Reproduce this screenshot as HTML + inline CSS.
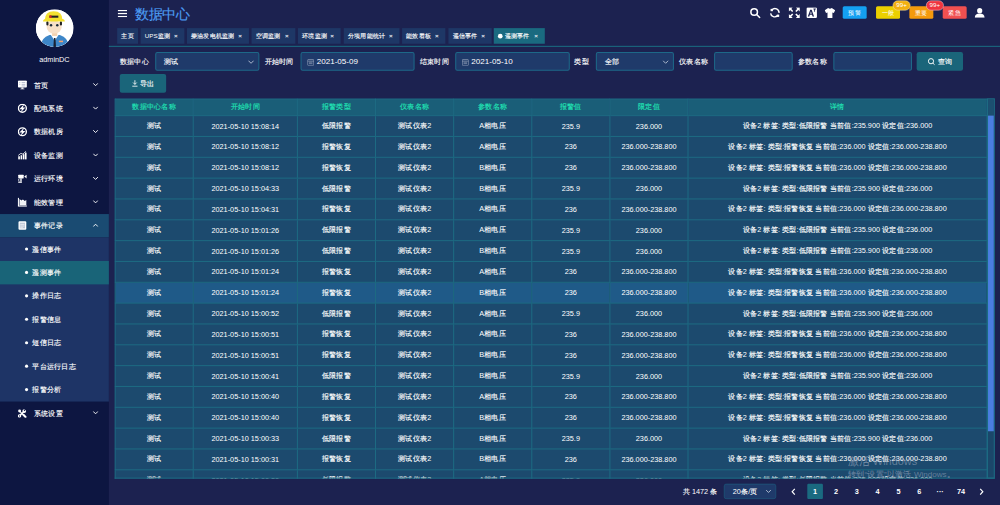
<!DOCTYPE html>
<html><head><meta charset="utf-8">
<style>
html,body{margin:0;padding:0;width:1000px;height:505px;overflow:hidden;background:#1c2250;}
*{box-sizing:border-box;}
#wrap{position:absolute;left:0;top:0;width:1920px;height:970px;transform:scale(0.5208333);transform-origin:0 0;font-family:"Liberation Sans",sans-serif;color:#fff;font-size:14px;background:#1c2250;overflow:hidden;}
.abs{position:absolute;}
i{font-style:normal;-webkit-text-stroke:0.25px;}
.hb i{-webkit-text-stroke:0;}
/* sidebar */
#side{position:absolute;left:0;top:0;width:209px;height:970px;background:#0d1641;}
#avatar{position:absolute;left:69px;top:18px;width:72px;height:72px;border-radius:50%;background:#fff;overflow:hidden;}
#uname{position:absolute;left:0;width:209px;top:107px;text-align:center;font-size:14px;color:#fff;}
.mi{position:absolute;left:0;width:209px;height:45px;line-height:45px;font-size:14px;color:#fff;}
.mi .ic{position:absolute;left:34px;top:13px;width:18px;height:18px;}
.mi .tx{position:absolute;left:65px;top:0;}
.mi .ar{position:absolute;left:178px;top:18px;width:11px;height:7px;}
.mi.act{background:#1a4b72;}
.sub{position:absolute;left:0;width:209px;top:455.7px;height:315px;background:#1e3466;}
.si{position:absolute;left:0;width:209px;height:45px;line-height:45px;font-size:14px;color:#fff;}
.si .dot{position:absolute;left:48px;top:19.5px;width:6px;height:6px;border-radius:50%;background:#fff;}
.si .tx{position:absolute;left:62px;top:0;}
.si.act{background:#196478;}
/* header */
#title{position:absolute;left:260px;top:9px;font-size:26px;line-height:36px;color:#4d9ef5;}
.tab{position:absolute;top:54px;height:30px;line-height:30px;font-size:12px;background:#1e3766;color:#fff;padding-left:8px;white-space:nowrap;}
.tab .x{position:absolute;right:13px;top:0;font-size:12px;color:#e8ecf4;font-weight:bold;}
.tab.act{background:#1a6a80;}
#tabline{position:absolute;left:209px;top:88px;width:1711px;height:2px;background:#1a6a80;}
.lbl{position:absolute;top:100px;line-height:36px;font-size:14px;color:#fff;}
.inp{position:absolute;top:100px;height:36px;border:2px solid #1d6888;border-radius:4px;background:#1f3a6a;line-height:32px;font-size:14px;color:#fff;}
.btn{position:absolute;height:36px;border-radius:4px;background:#1a657a;line-height:36px;font-size:14px;color:#fff;text-align:center;}
/* table */
#tbl{position:absolute;left:220px;top:189px;width:1690px;height:730px;background:#1c4a6e;overflow:hidden;}
table{border-collapse:collapse;table-layout:fixed;width:1676px;}
td,th{text-align:center;border:2px solid #1d6a82;font-weight:normal;font-size:14px;padding:0;white-space:nowrap;overflow:hidden;}
th{height:32px;background:#1a5e78;color:#20e6b6;}
td{height:40px;color:#fff;}
tr.hov td{background:#1f5a88;}
#gut{position:absolute;left:1895px;top:189px;width:15px;height:730px;background:#1b476a;border-left:2px solid #1d6a82;border-right:2px solid #1d6a82;border-top:2px solid #1d6a82;border-bottom:2px solid #1d6a82;}
#gut .gh{position:absolute;left:0;top:0;width:100%;height:32px;background:#1c4f70;}
#tblb{position:absolute;left:220px;top:917px;width:1690px;height:2px;background:#1d6a82;}
#thumb{position:absolute;left:1897px;top:222px;width:11px;height:606px;background:#4a7ee0;}
/* pagination */
.pg{position:absolute;top:929px;height:29px;line-height:29px;font-size:14px;color:#fff;text-align:center;font-weight:bold;}
</style></head><body>
<div id="wrap">
<!-- sidebar -->
<div id="side">
  <div id="avatar">
    <svg width="72" height="72" viewBox="0 0 72 72">
      <rect width="72" height="72" fill="#fff"/>
      <path d="M8 72 Q10 54 26 49 L46 49 Q62 54 64 72Z" fill="#3d86c8"/>
      <path d="M28 48 L36 60 L44 48Z" fill="#fff"/>
      <path d="M34.5 55 h3 l1 17 h-5z" fill="#1a2233"/>
      <rect x="31" y="42" width="10" height="9" fill="#f3d2b0"/>
      <ellipse cx="35" cy="34" rx="14.5" ry="12.5" fill="#f7e0c8"/>
      <rect x="20" y="23" width="4" height="8" rx="2" fill="#222"/>
      <rect x="46" y="23" width="4" height="8" rx="2" fill="#222"/>
      <circle cx="29" cy="30.5" r="2.4" fill="#1a2a3a"/><circle cx="41" cy="30.5" r="2.4" fill="#1a2a3a"/>
      <path d="M17 21 Q17 3.5 34 3.5 Q51 3.5 51 21 Z" fill="#f4e030"/>
      <path d="M13.5 23.5 Q14 18 20 18 L49 18 Q55 18 55.5 23.5Z" fill="#f4e030"/>
      <rect x="26" y="12" width="17" height="4" fill="#222"/>
      <rect x="26" y="11.5" width="4" height="5" fill="#d82020"/>
      <rect x="44" y="60" width="8" height="3" fill="#f0a070"/>
    </svg>
  </div>
  <div id="uname">adminDC</div>

  <div class="mi" style="top:140.7px"><svg class="ic" viewBox="0 0 18 18"><rect x="0.5" y="0.5" width="17" height="13.5" rx="1.5" fill="#fff"/><path d="M3 4.5h2M3 8h2M7.5 4.5h7M7.5 8h7M7.5 11h7" stroke="#8890b0" stroke-width="1.1"/><rect x="7" y="14" width="4" height="2.6" fill="#fff"/><rect x="5" y="16.3" width="8" height="1.7" fill="#fff"/></svg><span class="tx"><i>首页</i></span><svg class="ar" viewBox="0 0 11 7"><path d="M1 1l4.5 4.5L10 1" stroke="#fff" stroke-width="1.8" fill="none"/></svg></div>
  <div class="mi" style="top:185.7px"><svg class="ic" viewBox="0 0 18 18"><circle cx="9" cy="9" r="7.6" stroke="#fff" stroke-width="2.6" fill="none"/><path d="M12.5 0.8L3.2 10.6h5L5.5 17.2 14.8 7.4H9.8z" fill="#fff"/></svg><span class="tx"><i>配电系统</i></span><svg class="ar" viewBox="0 0 11 7"><path d="M1 1l4.5 4.5L10 1" stroke="#fff" stroke-width="1.8" fill="none"/></svg></div>
  <div class="mi" style="top:230.7px"><svg class="ic" viewBox="0 0 18 18"><circle cx="9" cy="9" r="7.6" stroke="#fff" stroke-width="2.6" fill="none"/><path d="M12.5 0.8L3.2 10.6h5L5.5 17.2 14.8 7.4H9.8z" fill="#fff"/></svg><span class="tx"><i>数据机房</i></span><svg class="ar" viewBox="0 0 11 7"><path d="M1 1l4.5 4.5L10 1" stroke="#fff" stroke-width="1.8" fill="none"/></svg></div>
  <div class="mi" style="top:275.7px"><svg class="ic" viewBox="0 0 18 18"><rect x="1" y="11" width="3.2" height="6" fill="#fff"/><rect x="5.5" y="9" width="3.2" height="8" fill="#fff"/><rect x="10" y="7" width="3" height="10" fill="#fff"/><rect x="14" y="4" width="3" height="13" fill="#fff"/><path d="M1 9.5L6 5.5 10 7 16 1.5" stroke="#fff" stroke-width="1.6" fill="none"/></svg><span class="tx"><i>设备监测</i></span><svg class="ar" viewBox="0 0 11 7"><path d="M1 1l4.5 4.5L10 1" stroke="#fff" stroke-width="1.8" fill="none"/></svg></div>
  <div class="mi" style="top:320.7px"><svg class="ic" viewBox="0 0 18 18"><rect x="1" y="1.5" width="10.5" height="7" rx="1" fill="#fff"/><path d="M12.5 5L17 1.5v7z" fill="#fff"/><rect x="5" y="8.5" width="2.6" height="6" fill="#fff"/><rect x="1" y="14.5" width="7" height="2.5" fill="#fff"/><rect x="1" y="10" width="2" height="3" fill="#fff"/></svg><span class="tx"><i>运行环境</i></span><svg class="ar" viewBox="0 0 11 7"><path d="M1 1l4.5 4.5L10 1" stroke="#fff" stroke-width="1.8" fill="none"/></svg></div>
  <div class="mi" style="top:365.7px"><svg class="ic" viewBox="0 0 18 18"><path d="M1.2 0.5v16.3h16.3" stroke="#fff" stroke-width="2.4" fill="none"/><path d="M3.5 15V3l3.5 3 3-2 3.5 3 3-2V15z" fill="#fff"/><path d="M3.5 9h12.5M3.5 12.5h12.5" stroke="#c8cee0" stroke-width="1"/></svg><span class="tx"><i>能效管理</i></span><svg class="ar" viewBox="0 0 11 7"><path d="M1 1l4.5 4.5L10 1" stroke="#fff" stroke-width="1.8" fill="none"/></svg></div>
  <div class="mi act" style="top:410.7px"><svg class="ic" viewBox="0 0 18 18"><rect x="1.5" y="1" width="15" height="16" rx="2" fill="#fff"/><rect x="4" y="3.5" width="10" height="11" fill="#c0cad8"/><path d="M5 7h8M5 10h8M5 12.5h5" stroke="#fff" stroke-width="1"/></svg><span class="tx"><i>事件记录</i></span><svg class="ar" viewBox="0 0 11 7"><path d="M1 6l4.5-4.5L10 6" stroke="#fff" stroke-width="1.8" fill="none"/></svg></div>
  <div class="sub"></div>
  <div class="si" style="top:455.7px"><span class="dot"></span><span class="tx"><i>遥信事件</i></span></div>
  <div class="si act" style="top:500.7px"><span class="dot"></span><span class="tx"><i>遥测事件</i></span></div>
  <div class="si" style="top:545.7px"><span class="dot"></span><span class="tx"><i>操作日志</i></span></div>
  <div class="si" style="top:590.7px"><span class="dot"></span><span class="tx"><i>报警信息</i></span></div>
  <div class="si" style="top:635.7px"><span class="dot"></span><span class="tx"><i>短信日志</i></span></div>
  <div class="si" style="top:680.7px"><span class="dot"></span><span class="tx"><i>平台运行日志</i></span></div>
  <div class="si" style="top:725.7px"><span class="dot"></span><span class="tx"><i>报警分析</i></span></div>
  <div class="mi" style="top:770.7px"><svg class="ic" viewBox="0 0 18 18"><path d="M4 14L12 6" stroke="#fff" stroke-width="3"/><circle cx="12.6" cy="5.2" r="3.6" fill="#fff"/><path d="M12.2 4.8L15.5 1.5" stroke="#0d1641" stroke-width="2.2"/><circle cx="3.4" cy="14.6" r="3.3" fill="#fff"/><circle cx="3.4" cy="14.6" r="1.1" fill="#0d1641"/><path d="M4 6L12 14" stroke="#fff" stroke-width="2.2"/><circle cx="3.6" cy="5" r="2.8" fill="#fff"/><path d="M11 12.5L15 16.5" stroke="#fff" stroke-width="4" stroke-linecap="round"/></svg><span class="tx"><i>系统设置</i></span><svg class="ar" viewBox="0 0 11 7"><path d="M1 1l4.5 4.5L10 1" stroke="#fff" stroke-width="1.8" fill="none"/></svg></div>
</div>

<!-- header -->
<svg class="abs" style="left:226px;top:19px" width="18" height="14" viewBox="0 0 18 14"><rect y="0" width="18" height="2.4" fill="#fff"/><rect y="5.8" width="18" height="2.4" fill="#fff"/><rect y="11.6" width="18" height="2.4" fill="#fff"/></svg>
<div id="title"><i>数据中心</i></div>

<!-- header icons -->
<svg class="abs" style="left:1439px;top:14px" width="22" height="22" viewBox="0 0 22 22"><circle cx="9" cy="9" r="6.3" stroke="#fff" stroke-width="3" fill="none"/><path d="M13.8 13.8L19.5 19.5" stroke="#fff" stroke-width="3" stroke-linecap="round"/></svg>
<svg class="abs" style="left:1477px;top:14px" width="22" height="21" viewBox="0 0 22 21"><path d="M5.2 5.2A7.6 7.6 0 0 1 18.6 10.8" stroke="#fff" stroke-width="2.8" fill="none"/><path d="M15.8 15.8A7.6 7.6 0 0 1 2.6 11.6" stroke="#fff" stroke-width="2.8" fill="none"/><rect x="2.5" y="3" width="4.5" height="4.5" fill="#fff"/><rect x="14.5" y="14" width="4.5" height="4.5" fill="#fff"/></svg>
<svg class="abs" style="left:1514px;top:14px" width="22" height="21" viewBox="0 0 22 21"><path d="M0.5 0.5h7.5L0.5 8zM21.5 0.5h-7.5l7.5 7.5zM0.5 20.5h7.5l-7.5-7.5zM21.5 20.5h-7.5l7.5-7.5z" fill="#fff"/><path d="M3 3l5 5M19 3l-5 5M3 18l5-5M19 18l-5-5" stroke="#fff" stroke-width="3"/></svg>
<svg class="abs" style="left:1548px;top:14px" width="21" height="21" viewBox="0 0 21 21"><rect x="0.5" y="0.5" width="20" height="20" rx="2.5" fill="#fff"/><path d="M3 17.5L7.6 4.5h2.8L15 17.5h-2.9l-1-3H6.9l-1 3zM7.6 12.2h2.8L9 7.6z" fill="#1c2250"/><path d="M13.8 2.5h4.6v1.5H16.9V8.5h-1.6V4H13.8z" fill="#1c2250"/></svg>
<svg class="abs" style="left:1583px;top:15px" width="21" height="20" viewBox="0 0 21 20"><path d="M7 0.5L0.5 4.5 3 10l2.8-1.2V19.5h9.4V8.8L18 10l2.5-5.5L14 0.5Q10.5 3.5 7 0.5z" fill="#fff"/></svg>

<div class="btn hb" style="left:1618px;top:12px;width:46px;height:24px;line-height:24px;font-size:12px;background:#14a0f2;border-radius:3px;"><i>预警</i></div>
<div class="btn hb" style="left:1682px;top:12px;width:46px;height:24px;line-height:24px;font-size:12px;background:#ecd000;border-radius:3px;"><i>一般</i></div>
<div class="btn hb" style="left:1746px;top:12px;width:46px;height:24px;line-height:24px;font-size:12px;background:#f59a0c;border-radius:3px;"><i>重要</i></div>
<div class="btn hb" style="left:1810px;top:12px;width:46px;height:24px;line-height:24px;font-size:12px;background:#f05050;border-radius:3px;"><i>紧急</i></div>
<div class="btn" style="left:1714px;top:1px;width:34px;height:19px;line-height:17px;font-size:12px;background:#f3b010;border-radius:10px;border:1px solid #f6e6b0;">99+</div>
<div class="btn" style="left:1778px;top:1px;width:34px;height:19px;line-height:17px;font-size:12px;background:#f0343f;border-radius:10px;border:1px solid #f0c8d0;">99+</div>
<svg class="abs" style="left:1871px;top:15px" width="20" height="19" viewBox="0 0 20 19"><circle cx="10" cy="5.5" r="5" fill="#fff"/><path d="M0.5 19Q1 11 10 11Q19 11 19.5 19z" fill="#fff"/></svg>

<!-- tabs -->
<div class="tab" style="left:225px;width:40px;"><i>主页</i></div>
<div class="tab" style="left:270px;width:84px;">UPS<i>监测</i><span class="x">×</span></div>
<div class="tab" style="left:358.5px;width:119px;"><i>柴油发电机监测</i><span class="x">×</span></div>
<div class="tab" style="left:483px;width:84px;"><i>空调监测</i><span class="x">×</span></div>
<div class="tab" style="left:572px;width:82px;"><i>环境监测</i><span class="x">×</span></div>
<div class="tab" style="left:660px;width:107px;"><i>分项用能统计</i><span class="x">×</span></div>
<div class="tab" style="left:772px;width:83px;"><i>能效看板</i><span class="x">×</span></div>
<div class="tab" style="left:861px;width:83px;"><i>遥信事件</i><span class="x">×</span></div>
<div class="tab act" style="left:948px;width:98px;"><span style="display:inline-block;width:9px;height:9px;border-radius:50%;background:#fff;margin-right:4px;vertical-align:-0.5px"></span><i>遥测事件</i><span class="x">×</span></div>
<div id="tabline"></div>

<!-- filter -->
<div class="lbl" style="left:230px"><i>数据中心</i></div>
<div class="inp" style="left:298px;width:200px;"><span style="position:absolute;left:15px"><i>测试</i></span><svg class="abs" style="left:176px;top:13px" width="12" height="8" viewBox="0 0 12 8"><path d="M1 1.5l5 5 5-5" stroke="#c8d0e0" stroke-width="1.6" fill="none"/></svg></div>
<div class="lbl" style="left:508px"><i>开始时间</i></div>
<div class="inp" style="left:577px;width:219px;"><svg class="abs" style="left:11px;top:11px" width="13" height="13" viewBox="0 0 13 13"><rect x="0.5" y="1.5" width="12" height="11" rx="1" stroke="#aab4c8" stroke-width="1.2" fill="none"/><path d="M0.5 4.5h12M3 6.5h7M3 9h7" stroke="#aab4c8" stroke-width="1"/></svg><span style="position:absolute;left:29px;font-size:15.5px">2021-05-09</span></div>
<div class="lbl" style="left:806px"><i>结束时间</i></div>
<div class="inp" style="left:874px;width:220px;"><svg class="abs" style="left:11px;top:11px" width="13" height="13" viewBox="0 0 13 13"><rect x="0.5" y="1.5" width="12" height="11" rx="1" stroke="#aab4c8" stroke-width="1.2" fill="none"/><path d="M0.5 4.5h12M3 6.5h7M3 9h7" stroke="#aab4c8" stroke-width="1"/></svg><span style="position:absolute;left:29px;font-size:15.5px">2021-05-10</span></div>
<div class="lbl" style="left:1103px"><i>类型</i></div>
<div class="inp" style="left:1144px;width:150px;"><span style="position:absolute;left:15px"><i>全部</i></span><svg class="abs" style="left:126px;top:13px" width="12" height="8" viewBox="0 0 12 8"><path d="M1 1.5l5 5 5-5" stroke="#c8d0e0" stroke-width="1.6" fill="none"/></svg></div>
<div class="lbl" style="left:1304px"><i>仪表名称</i></div>
<div class="inp" style="left:1371px;width:151px;"></div>
<div class="lbl" style="left:1532px"><i>参数名称</i></div>
<div class="inp" style="left:1600px;width:151px;"></div>
<div class="btn" style="left:1760px;top:100px;width:89px;"><svg style="position:absolute;left:21px;top:11px" width="15" height="15" viewBox="0 0 15 15"><circle cx="6.5" cy="6.5" r="5" stroke="#fff" stroke-width="1.8" fill="none"/><path d="M10 10l3.5 3.5" stroke="#fff" stroke-width="1.8"/></svg><span style="position:absolute;left:41px"><i>查询</i></span></div>
<div class="btn" style="left:230px;top:142px;width:89px;"><svg style="position:absolute;left:23px;top:11px" width="12" height="14" viewBox="0 0 12 14"><path d="M6 1v8M2.5 5.5L6 9l3.5-3.5M1 12.5h10" stroke="#fff" stroke-width="1.6" fill="none"/></svg><span style="position:absolute;left:39px"><i>导出</i></span></div>

<!-- table -->
<div id="tbl">
<table>
<colgroup><col style="width:150px"><col style="width:200px"><col style="width:150px"><col style="width:150px"><col style="width:150px"><col style="width:150px"><col style="width:150px"><col></colgroup>
<tr><th><i>数据中心名称</i></th><th><i>开始时间</i></th><th><i>报警类型</i></th><th><i>仪表名称</i></th><th><i>参数名称</i></th><th><i>报警值</i></th><th><i>限定值</i></th><th><i>详情</i></th></tr>
<tr><td><i>测试</i></td><td>2021-05-10 15:08:14</td><td><i>低限报警</i></td><td><i>测试仪表</i>2</td><td>A<i>相电压</i></td><td>235.9</td><td>236.000</td><td><i>设备</i>2 <i>标签</i>: <i>类型</i>:<i>低限报警</i> <i>当前值</i>:235.900 <i>设定值</i>:236.000</td></tr>
<tr><td><i>测试</i></td><td>2021-05-10 15:08:12</td><td><i>报警恢复</i></td><td><i>测试仪表</i>2</td><td>A<i>相电压</i></td><td>236</td><td>236.000-238.800</td><td><i>设备</i>2 <i>标签</i>: <i>类型</i>:<i>报警恢复</i> <i>当前值</i>:236.000 <i>设定值</i>:236.000-238.800</td></tr>
<tr><td><i>测试</i></td><td>2021-05-10 15:08:12</td><td><i>报警恢复</i></td><td><i>测试仪表</i>2</td><td>B<i>相电压</i></td><td>236</td><td>236.000-238.800</td><td><i>设备</i>2 <i>标签</i>: <i>类型</i>:<i>报警恢复</i> <i>当前值</i>:236.000 <i>设定值</i>:236.000-238.800</td></tr>
<tr><td><i>测试</i></td><td>2021-05-10 15:04:33</td><td><i>低限报警</i></td><td><i>测试仪表</i>2</td><td>B<i>相电压</i></td><td>235.9</td><td>236.000</td><td><i>设备</i>2 <i>标签</i>: <i>类型</i>:<i>低限报警</i> <i>当前值</i>:235.900 <i>设定值</i>:236.000</td></tr>
<tr><td><i>测试</i></td><td>2021-05-10 15:04:31</td><td><i>报警恢复</i></td><td><i>测试仪表</i>2</td><td>A<i>相电压</i></td><td>236</td><td>236.000-238.800</td><td><i>设备</i>2 <i>标签</i>: <i>类型</i>:<i>报警恢复</i> <i>当前值</i>:236.000 <i>设定值</i>:236.000-238.800</td></tr>
<tr><td><i>测试</i></td><td>2021-05-10 15:01:26</td><td><i>低限报警</i></td><td><i>测试仪表</i>2</td><td>A<i>相电压</i></td><td>235.9</td><td>236.000</td><td><i>设备</i>2 <i>标签</i>: <i>类型</i>:<i>低限报警</i> <i>当前值</i>:235.900 <i>设定值</i>:236.000</td></tr>
<tr><td><i>测试</i></td><td>2021-05-10 15:01:26</td><td><i>低限报警</i></td><td><i>测试仪表</i>2</td><td>B<i>相电压</i></td><td>235.9</td><td>236.000</td><td><i>设备</i>2 <i>标签</i>: <i>类型</i>:<i>低限报警</i> <i>当前值</i>:235.900 <i>设定值</i>:236.000</td></tr>
<tr><td><i>测试</i></td><td>2021-05-10 15:01:24</td><td><i>报警恢复</i></td><td><i>测试仪表</i>2</td><td>A<i>相电压</i></td><td>236</td><td>236.000-238.800</td><td><i>设备</i>2 <i>标签</i>: <i>类型</i>:<i>报警恢复</i> <i>当前值</i>:236.000 <i>设定值</i>:236.000-238.800</td></tr>
<tr class="hov"><td><i>测试</i></td><td>2021-05-10 15:01:24</td><td><i>报警恢复</i></td><td><i>测试仪表</i>2</td><td>B<i>相电压</i></td><td>236</td><td>236.000-238.800</td><td><i>设备</i>2 <i>标签</i>: <i>类型</i>:<i>报警恢复</i> <i>当前值</i>:236.000 <i>设定值</i>:236.000-238.800</td></tr>
<tr><td><i>测试</i></td><td>2021-05-10 15:00:52</td><td><i>低限报警</i></td><td><i>测试仪表</i>2</td><td>A<i>相电压</i></td><td>235.9</td><td>236.000</td><td><i>设备</i>2 <i>标签</i>: <i>类型</i>:<i>低限报警</i> <i>当前值</i>:235.900 <i>设定值</i>:236.000</td></tr>
<tr><td><i>测试</i></td><td>2021-05-10 15:00:51</td><td><i>报警恢复</i></td><td><i>测试仪表</i>2</td><td>A<i>相电压</i></td><td>236</td><td>236.000-238.800</td><td><i>设备</i>2 <i>标签</i>: <i>类型</i>:<i>报警恢复</i> <i>当前值</i>:236.000 <i>设定值</i>:236.000-238.800</td></tr>
<tr><td><i>测试</i></td><td>2021-05-10 15:00:51</td><td><i>报警恢复</i></td><td><i>测试仪表</i>2</td><td>B<i>相电压</i></td><td>236</td><td>236.000-238.800</td><td><i>设备</i>2 <i>标签</i>: <i>类型</i>:<i>报警恢复</i> <i>当前值</i>:236.000 <i>设定值</i>:236.000-238.800</td></tr>
<tr><td><i>测试</i></td><td>2021-05-10 15:00:41</td><td><i>低限报警</i></td><td><i>测试仪表</i>2</td><td>B<i>相电压</i></td><td>235.9</td><td>236.000</td><td><i>设备</i>2 <i>标签</i>: <i>类型</i>:<i>低限报警</i> <i>当前值</i>:235.900 <i>设定值</i>:236.000</td></tr>
<tr><td><i>测试</i></td><td>2021-05-10 15:00:40</td><td><i>报警恢复</i></td><td><i>测试仪表</i>2</td><td>A<i>相电压</i></td><td>236</td><td>236.000-238.800</td><td><i>设备</i>2 <i>标签</i>: <i>类型</i>:<i>报警恢复</i> <i>当前值</i>:236.000 <i>设定值</i>:236.000-238.800</td></tr>
<tr><td><i>测试</i></td><td>2021-05-10 15:00:40</td><td><i>报警恢复</i></td><td><i>测试仪表</i>2</td><td>B<i>相电压</i></td><td>236</td><td>236.000-238.800</td><td><i>设备</i>2 <i>标签</i>: <i>类型</i>:<i>报警恢复</i> <i>当前值</i>:236.000 <i>设定值</i>:236.000-238.800</td></tr>
<tr><td><i>测试</i></td><td>2021-05-10 15:00:33</td><td><i>低限报警</i></td><td><i>测试仪表</i>2</td><td>B<i>相电压</i></td><td>235.9</td><td>236.000</td><td><i>设备</i>2 <i>标签</i>: <i>类型</i>:<i>低限报警</i> <i>当前值</i>:235.900 <i>设定值</i>:236.000</td></tr>
<tr><td><i>测试</i></td><td>2021-05-10 15:00:31</td><td><i>报警恢复</i></td><td><i>测试仪表</i>2</td><td>B<i>相电压</i></td><td>236</td><td>236.000-238.800</td><td><i>设备</i>2 <i>标签</i>: <i>类型</i>:<i>报警恢复</i> <i>当前值</i>:236.000 <i>设定值</i>:236.000-238.800</td></tr>
<tr><td><i>测试</i></td><td>2021-05-10 15:00:30</td><td><i>低限报警</i></td><td><i>测试仪表</i>2</td><td>A<i>相电压</i></td><td>235.9</td><td>236.000</td><td><i>设备</i>2 <i>标签</i>: <i>类型</i>:<i>低限报警</i> <i>当前值</i>:235.900 <i>设定值</i>:236.000</td></tr>
</table>
</div>
<div id="gut"><div class="gh"></div></div><div id="tblb"></div>
<div id="thumb"></div>

<div class="abs" style="left:1628px;top:872px;font-size:21px;line-height:28px;color:rgba(170,180,200,0.5);white-space:nowrap;"><i>激活</i> Windows</div>
<div class="abs" style="left:1628px;top:900px;font-size:15.5px;line-height:20px;color:rgba(170,180,200,0.5);white-space:nowrap;"><i>转到</i>“<i>设置</i>”<i>以激活</i> Windows<i>。</i></div>
<!-- pagination -->
<div class="pg" style="left:1310px;width:68px;font-weight:normal;"><i>共</i> 1472 <i>条</i></div>
<div class="inp" style="left:1390px;top:929px;width:100px;height:29px;line-height:26px;border-width:1.5px;"><span style="position:absolute;left:16px">20<i>条</i>/<i>页</i></span><svg class="abs" style="left:79px;top:10px" width="11" height="7" viewBox="0 0 11 7"><path d="M1 1l4.5 4.5L10 1" stroke="#c8d0e0" stroke-width="1.6" fill="none"/></svg></div>
<svg class="abs" style="left:1518px;top:937px" width="10" height="14" viewBox="0 0 10 14"><path d="M8 1.5L3 7l5 5.5" stroke="#fff" stroke-width="2.3" fill="none"/></svg>
<div class="pg" style="left:1550px;width:30px;background:#1a6a80;border-radius:2px;">1</div>
<div class="pg" style="left:1590px;width:30px;">2</div>
<div class="pg" style="left:1630px;width:30px;">3</div>
<div class="pg" style="left:1670px;width:30px;">4</div>
<div class="pg" style="left:1710px;width:30px;">5</div>
<div class="pg" style="left:1750px;width:30px;">6</div>
<div class="pg" style="left:1790px;width:30px;">···</div>
<div class="pg" style="left:1830px;width:30px;">74</div>
<svg class="abs" style="left:1880px;top:937px" width="10" height="14" viewBox="0 0 10 14"><path d="M2 1.5L7 7l-5 5.5" stroke="#fff" stroke-width="2.3" fill="none"/></svg>
</div>
</body></html>
